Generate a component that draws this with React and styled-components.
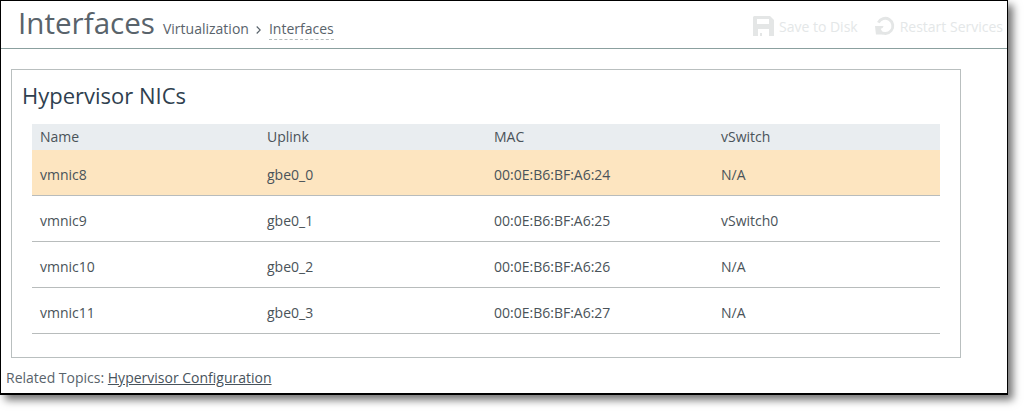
import React from 'react';
import styled, { createGlobalStyle } from 'styled-components';

const GlobalStyle = createGlobalStyle`
    html, body {
        margin: 0;
        padding: 0;
        height: 411px;
        background: #fff;
        overflow: hidden;
    }
    body {
        font-family: "Open Sans", "Noto Sans", sans-serif;
    }
`;

const Window = styled.div`
    box-sizing: border-box;
    width: 1008px;
    height: 395px;
    border: 1px solid #000;
    border-bottom-width: 2px;
    background: #fff;
    box-shadow: 5px 5px 8px rgba(0, 0, 0, 0.55);
    overflow: hidden;
    display: flex;
    flex-direction: column;
`;

const Header = styled.header`
    box-sizing: border-box;
    height: 48px;
    flex: none;
    border-bottom: 1px solid #8ba09f;
    display: flex;
    align-items: flex-end;
    justify-content: space-between;
    padding: 0 4px 6px 17px;
`;

const TitleGroup = styled.div`
    display: flex;
    align-items: flex-end;
`;

const PageTitle = styled.h1`
    margin: 0 0 -1px;
    font-size: 29.6px;
    line-height: 40px;
    font-weight: 400;
    color: #59636b;
`;

const Crumb = styled.span`
    font-size: 14px;
    line-height: 19px;
    color: #59636b;
    margin: 0 0 2px ${props => props.gap || 0}px;
    padding-bottom: 1px;
    border-bottom: 1px ${props => props.current ? 'dashed #b5bcbc' : 'solid transparent'};
`;

const Chevron = styled.svg`
    width: 5px;
    height: 8px;
    margin: 0 0 8px 7px;
    flex: none;
`;

const Actions = styled.div`
    display: flex;
    align-items: center;
    gap: 17px;
    padding-bottom: 6px;
`;

const Action = styled.span`
    display: flex;
    align-items: center;
    gap: 5px;
    font-size: 14px;
    color: #e4e7e8;
`;

const Content = styled.main`
    padding: 20px 46px 0 10px;
`;

const Panel = styled.section`
    box-sizing: border-box;
    height: 289px;
    border: 1px solid #b9bfbf;
    padding: 8px 20px 0 20px;
`;

const PanelTitle = styled.h2`
    margin: 0 0 12px -10px;
    font-size: 22px;
    line-height: 34px;
    font-weight: 400;
    color: #2f3f4f;
`;

const Table = styled.table`
    width: 908px;
    border-collapse: collapse;
    table-layout: fixed;
    font-size: 14px;
    color: #4a5359;
`;

const HeadCell = styled.th`
    height: 24px;
    padding: 0 8px 2px;
    font-weight: 400;
    text-align: left;
    background: #e9edf0;
`;

const Row = styled.tr`
    background: ${props => props.selected ? '#fde5c0' : '#fff'};
    border-bottom: 1px solid #b8bcbc;
`;

const Cell = styled.td`
    height: 41px;
    padding: 4px 8px 0;
`;

const Footer = styled.footer`
    margin-left: -5px;
    padding-top: 10px;
    font-size: 14px;
    line-height: 20px;
    color: #59636b;
`;

const TopicLink = styled.a`
    color: #48535c;
    text-decoration: underline;
`;

const rows = [
    ['vmnic8', 'gbe0_0', '00:0E:B6:BF:A6:24', 'N/A'],
    ['vmnic9', 'gbe0_1', '00:0E:B6:BF:A6:25', 'vSwitch0'],
    ['vmnic10', 'gbe0_2', '00:0E:B6:BF:A6:26', 'N/A'],
    ['vmnic11', 'gbe0_3', '00:0E:B6:BF:A6:27', 'N/A'],
];

const DiskIcon = () => (
    <svg width="21" height="20" viewBox="0 0 21 20">
        <path fill="#e4e6e6" fillRule="evenodd" d="M1 0h16l4 4v16H16v-7H5v7H0V1zM4 3v5h12V3z" />
        <path fill="#e4e6e6" d="M7 17h2v3H7z" />
    </svg>
);

const RestartIcon = () => (
    <svg width="20" height="20" viewBox="0 0 21 20" fill="none">
        <path stroke="#e4e6e6" strokeWidth="3" d="M3.5 6.5A8 8 0 1 1 5 15.5" />
        <path fill="#e4e6e6" d="M0 10h9l-1 2-2 1 3 6H1z" />
    </svg>
);

function App() {
    return (
        <>
            <GlobalStyle />
            <Window>
                <Header>
                    <TitleGroup>
                        <PageTitle>Interfaces</PageTitle>
                        <Crumb gap={8}>Virtualization</Crumb>
                        <Chevron viewBox="0 0 5 8" fill="none">
                            <path stroke="#59636b" strokeWidth="1.1" d="M0.7 0.5L4.2 4L0.7 7.5" />
                        </Chevron>
                        <Crumb gap={8} current>Interfaces</Crumb>
                    </TitleGroup>
                    <Actions>
                        <Action><DiskIcon />Save to Disk</Action>
                        <Action><RestartIcon />Restart Services</Action>
                    </Actions>
                </Header>
                <Content>
                    <Panel>
                        <PanelTitle>Hypervisor NICs</PanelTitle>
                        <Table>
                            <thead>
                                <tr>
                                    <HeadCell>Name</HeadCell>
                                    <HeadCell>Uplink</HeadCell>
                                    <HeadCell>MAC</HeadCell>
                                    <HeadCell>vSwitch</HeadCell>
                                </tr>
                            </thead>
                            <tbody>
                                {rows.map((row, index) => (
                                    <Row key={row[0]} selected={index === 0}>
                                        {row.map(value => <Cell key={value}>{value}</Cell>)}
                                    </Row>
                                ))}
                            </tbody>
                        </Table>
                    </Panel>
                    <Footer>
                        Related Topics: <TopicLink href="#">Hypervisor Configuration</TopicLink>
                    </Footer>
                </Content>
            </Window>
        </>
    );
}

export default App;
